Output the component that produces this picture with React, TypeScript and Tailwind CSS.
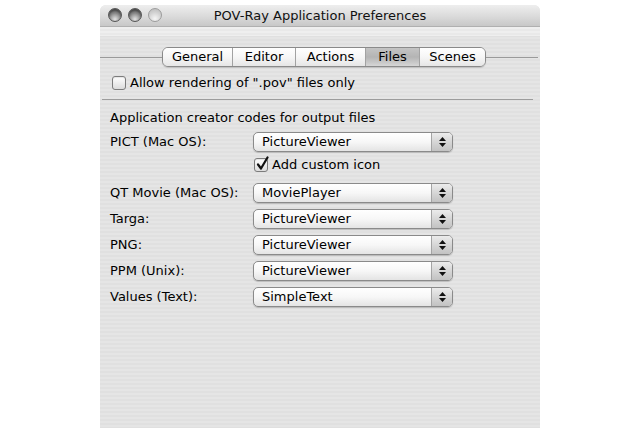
import React from 'react';

const font = { fontFamily: '"DejaVu Sans", "Liberation Sans", sans-serif' };

function Light({ dim }: { dim?: boolean }) {
  return (
    <div
      className={
        dim
          ? "w-[14px] h-[14px] rounded-full border border-[#9c9c9c] bg-[radial-gradient(circle_at_50%_80%,#f6f6f6,#d2d2d2_55%,#b8b8b8)]"
          : "w-[14px] h-[14px] rounded-full border border-[#555555] bg-[radial-gradient(circle_at_50%_85%,#e4e4e4,#8a8a8a_50%,#5a5a5a)] shadow-[inset_0_2px_2px_rgba(0,0,0,0.35)]"
      }
    />
  );
}

function Checkbox({ checked }: { checked?: boolean }) {
  return (
    <div className="relative w-[14px] h-[14px] rounded-[3px] border border-[#7c7c7c] bg-gradient-to-b from-white to-[#dcdcdc] shadow-[inset_0_1px_1px_rgba(0,0,0,0.1)]">
      {checked && (
        <svg className="absolute left-[1px] top-[-3px]" width="13" height="15" viewBox="0 0 13 15">
          <path d="M2 8.5 L5 12.5 L11.5 1.5" fill="none" stroke="#111" strokeWidth="2.2" strokeLinecap="round" strokeLinejoin="round" />
        </svg>
      )}
    </div>
  );
}

function Popup({ value }: { value: string }) {
  return (
    <div className="flex h-[20px] w-[200px] rounded-[5px] border border-[#8a8a8a] overflow-hidden bg-gradient-to-b from-white via-[#f7f7f7] to-[#e4e4e4] shadow-[0_1px_1px_rgba(0,0,0,0.18)]">
      <div className="flex-1 pl-[8px] leading-[18px] text-[13px] text-black">{value}</div>
      <div className="w-[21px] border-l border-[#a4a4a4] bg-gradient-to-b from-[#ececec] via-[#d6d6d6] to-[#c2c2c2] flex flex-col items-center justify-center gap-[2px]">
        <svg width="7" height="4" viewBox="0 0 7 4"><path d="M3.5 0 L7 4 L0 4 Z" fill="#111" /></svg>
        <svg width="7" height="4" viewBox="0 0 7 4"><path d="M0 0 L7 0 L3.5 4 Z" fill="#111" /></svg>
      </div>
    </div>
  );
}

const tabs = [
  { label: 'General', w: 'w-[70px]' },
  { label: 'Editor', w: 'w-[63px]' },
  { label: 'Actions', w: 'w-[70px]' },
  { label: 'Files', w: 'w-[54px]', active: true },
  { label: 'Scenes', w: 'w-[65px]' },
];

const rows = [
  { label: 'QT Movie (Mac OS):', value: 'MoviePlayer' },
  { label: 'Targa:', value: 'PictureViewer' },
  { label: 'PNG:', value: 'PictureViewer' },
  { label: 'PPM (Unix):', value: 'PictureViewer' },
  { label: 'Values (Text):', value: 'SimpleText' },
];

export default function App() {
  return (
    <div className="w-[640px] h-[428px] bg-white overflow-hidden pt-[5px] pl-[100px]" style={font}>
      <div className="w-[440px] h-[423px] flex flex-col rounded-t-[6px] overflow-hidden bg-[repeating-linear-gradient(180deg,#e5e5e5_0px,#e5e5e5_2px,#e0e0e0_2px,#e0e0e0_4px)] text-[13px] text-black">
        {/* title bar */}
        <div className="relative h-[22px] flex items-center justify-center bg-gradient-to-b from-[#eeeeee] via-[#dcdcdc] to-[#c8c8c8] border-b border-[#b0b0b0]">
          <div className="absolute left-[8px] top-[3px] flex gap-[6px]">
            <Light />
            <Light />
            <Light dim />
          </div>
          <span className="text-[13px] text-[#111]">POV-Ray Application Preferences</span>
        </div>

        <div className="h-[9px] bg-[repeating-linear-gradient(180deg,#efefef_0px,#efefef_2px,#e9e9e9_2px,#e9e9e9_4px)]" />

        {/* tabs */}
        <div className="mt-[11px] flex items-center h-[20px]">
          <div className="w-[62px] h-px bg-[#9a9a9a]" />
          <div className="flex h-[20px] rounded-[6px] border border-[#8a8a8a] overflow-hidden shadow-[0_1px_1px_rgba(0,0,0,0.15)]">
            {tabs.map((t, i) => (
              <div
                key={t.label}
                className={
                  (t.active
                    ? 'bg-gradient-to-b from-[#c4c4c4] via-[#b4b4b4] to-[#d6d6d6] '
                    : 'bg-gradient-to-b from-white via-[#f6f6f6] to-[#e6e6e6] ') +
                  t.w +
                  (i < tabs.length - 1 ? ' border-r border-[#a2a2a2]' : '') +
                  ' flex items-center justify-center leading-[18px]'
                }
              >
                {t.label}
              </div>
            ))}
          </div>
          <div className="flex-1 h-px bg-[#9a9a9a] mr-[2px]" />
        </div>

        {/* allow rendering */}
        <div className="mt-[9px] flex items-center gap-[4px] pl-[12px] h-[14px]">
          <Checkbox />
          <span>Allow rendering of ".pov" files only</span>
        </div>

        <div className="mt-[9px] ml-[2px] mr-[7px] h-px bg-[#9c9c9c]" />

        <div className="mt-[10px] pl-[10px] leading-[16px]">Application creator codes for output files</div>

        <div className="mt-[6px] flex items-center h-[20px] pl-[10px]">
          <div className="w-[143px]">PICT (Mac OS):</div>
          <Popup value="PictureViewer" />
        </div>

        <div className="mt-[5px] flex items-center h-[16px] pl-[154px] gap-[4px]">
          <Checkbox checked />
          <span>Add custom icon</span>
        </div>

        {rows.map((r, i) => (
          <div key={r.label} className={(i === 0 ? 'mt-[10px]' : 'mt-[6px]') + ' flex items-center h-[20px] pl-[10px]'}>
            <div className="w-[143px]">{r.label}</div>
            <Popup value={r.value} />
          </div>
        ))}
      </div>
    </div>
  );
}
